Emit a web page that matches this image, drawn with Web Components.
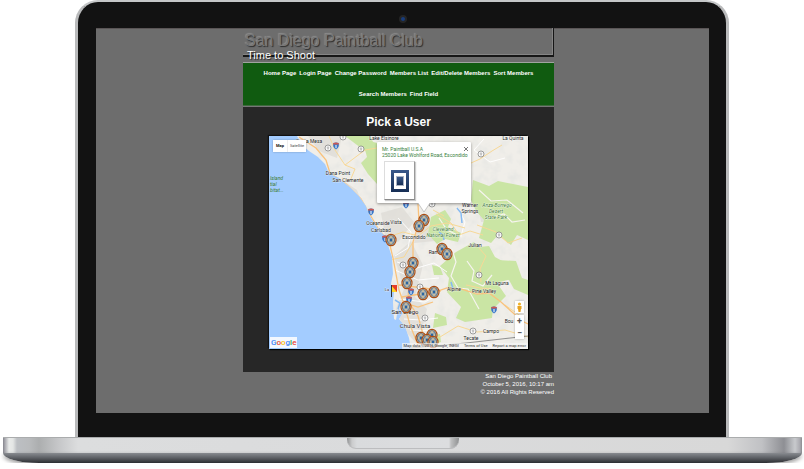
<!DOCTYPE html>
<html lang="en">
<head>
<meta charset="utf-8">
<title>San Diego Paintball Club</title>
<style>
body{margin:0;background:#fff;font-family:"Liberation Sans",Arial,sans-serif;overflow:hidden}
</style>
</head>
<body>
<laptop-frame>
  <club-page>
    <club-header slot="header"></club-header>
    <club-nav slot="nav"></club-nav>
    <field-map></field-map>
    <club-footer slot="footer"></club-footer>
  </club-page>
</laptop-frame>
<script>
function define(name, html, setup) {
  const t = document.createElement('template');
  t.innerHTML = html;
  customElements.define(name, class extends HTMLElement {
    constructor() {
      super();
      this.attachShadow({ mode: 'open' }).append(t.content.cloneNode(true));
      if (setup) setup(this.shadowRoot);
    }
  });
}

define('laptop-frame', `
<style>
:host{display:block}
.lid{margin:0 75px;box-sizing:border-box;border:3px solid #b9babb;border-top:2px solid #c5c7c8;border-bottom:0;border-radius:23px 23px 0 0;background:#121212;padding:0 17px 24px 18px}
.cam{height:26px;display:grid;place-items:center;padding-top:8px;box-sizing:border-box}
.cam i{width:4px;height:4px;border-radius:50%;background:#173c7c;border:2px solid #252525}
.screen{background:#6d6d6d;min-height:385px;box-shadow:inset 0 1px #5a5556;overflow:hidden}
.base{margin:0 2px 0 3px;height:16px;box-sizing:border-box;border-top:1px solid #aaacad;background:linear-gradient(90deg,#85858d 0,#a9a9af 2px,#e9ebea 6px,#e4e6e5 10px,#bcbfc3 14px,#b9bbbd 26px,#acaeaf 36px,#c5c6c8 55px,#dcddde 75px,#dadbdc 50%,#d8d8d8 calc(100% - 74px),#c0c1c4 calc(100% - 40px),#8e8f94 calc(100% - 18px),#c8cacd calc(100% - 7px),#aaaab0 calc(100% - 2px),#8c8c90 100%);display:flex;justify-content:center}
.notch{width:112px;height:11px;border-radius:0 0 9px 9px;background:linear-gradient(90deg,#8f9192,#cbcccd 5px,#d9dbdd 10px,#dcdddf calc(100% - 10px),#bfc0c1 calc(100% - 8px),#8f9192);box-shadow:inset 0 -1px #bcbdbf}
.foot{margin:0 2px 0 3px;height:10px;background:linear-gradient(#888b90,#606368 45%,#2c2d31);border-radius:0 0 36px 36px/0 0 10px 10px;box-shadow:0 2px 4px #0006}
</style>
<div class="lid"><div class="cam"><i></i></div><div class="screen"><slot></slot></div></div>
<div class="base"><div class="notch"></div></div><div class="foot"></div>`);

define('club-page', `
<style>
:host{display:block;padding:0 155px 0 147px}
main{background:#272727;padding:8px 26px 23px;border-top:1px solid #777;box-sizing:border-box}
h2{margin:0 0 7px;font-size:12px;line-height:14px;color:#fff;text-align:center}
</style>
<slot name="header"></slot><slot name="nav"></slot>
<main><h2>Pick a User</h2><slot></slot></main>
<slot name="footer"></slot>`);

define('club-header', `
<style>
:host{display:block;padding-bottom:5px}
header{height:29px;box-sizing:border-box;border-right:1px solid #161616;border-bottom:2px solid #161616;box-shadow:inset -1px -1px #858585;padding:5px 0 0 2px}
h1{margin:0;font-size:16px;line-height:16px;font-weight:400;color:#787878;text-shadow:1px 1px 1px #2c2c2c,-1px -1px 1px #8c8c8c;white-space:nowrap}
p{margin:0 0 0 2px;font-size:11px;line-height:12px;color:#fff;text-shadow:1px 1px 1px #222;white-space:nowrap}
</style>
<header><h1>San Diego Paintball Club</h1><p>Time to Shoot</p></header>`);

define('club-nav', `
<style>
:host{display:block}
nav{background:#105b10;border-top:1px solid #a0a4a0;border-bottom:1px solid #3c6b3c;display:flex;flex-wrap:wrap;justify-content:center;column-gap:3px;padding:0 16px}
a{color:#fff;font-size:6px;line-height:21px;font-weight:700;text-decoration:none;white-space:nowrap}
</style>
<nav></nav>`, root => {
  for (const label of ['Home Page','Login Page','Change Password','Members List','Edit/Delete Members','Sort Members','Search Members','Find Field']) {
    const a = document.createElement('a');
    a.href = '#'; a.textContent = label;
    root.querySelector('nav').append(a);
  }
});

define('club-footer', `
<style>
:host{display:block;text-align:right;color:#fff;font-size:6px;line-height:8px}
p{margin:0}.n{padding-right:2px}
</style>
<p class="n">San Diego Paintball Club</p><p>October 5, 2016, 10:17 am</p><p>© 2016 All Rights Reserved</p>`);

define('field-map', `
<style>
:host{display:block;position:relative;font-family:Roboto,"Liberation Sans",sans-serif;box-shadow:1px 1px 1px #000,-1px -1px 1px #111}
svg{display:block}
.map{width:100%;height:auto}
button{border:0;margin:0;padding:0;background:#fff;font:inherit;color:#333;cursor:pointer}
.type{position:absolute;left:4px;top:4px;display:flex;background:#fff;border-radius:1px;box-shadow:0 0 2px #0005;font-size:4px;line-height:12px}
.type button{padding:0 2px;color:#444}
.type button:first-child{font-weight:700;color:#111;border-right:1px solid #eee;padding:0 3px}
.zoom{position:absolute;right:4px;bottom:10px;display:grid;gap:2px}
.zoom div{display:grid;background:#fff;box-shadow:0 0 2px #0004}
.zoom button{width:9px;height:12px;display:grid;place-items:center;font-size:9px;line-height:12px;font-weight:700;color:#555}
.info{position:absolute;left:41.7%;top:6px;width:94px;height:61px;box-sizing:border-box;background:#fff;border-radius:1px;box-shadow:0 1px 3px #0006;padding:4px 5px;font-size:5px;line-height:6px;color:#38803c;white-space:nowrap}
.info p{margin:0}
.tail{position:absolute;left:40px;top:61px}
.close{position:absolute;right:2px;top:3px;width:7px;height:7px;display:grid;place-items:center}
.pic{margin:3px 0 0 2px;width:31px;height:39px;box-sizing:border-box;border:1px solid #ddd;border-right-color:#999;border-bottom-color:#888;display:grid;place-items:center;box-shadow:1px 1px 1px #0003}
.legal{position:absolute;right:0;bottom:0;display:flex;gap:5px;padding:0 2px;background:#f5f5f5aa;font-size:4px;line-height:6px;color:#333}
.legal a{color:inherit;text-decoration:none}
.g{position:absolute;left:1px;bottom:1px;background:#fffd;padding:0 1px;font:500 8px/11px Roboto,sans-serif}
</style>
<svg class="map" viewBox="269 136 259 213" role="img" aria-label="Map of the San Diego area">
<defs>
<filter id="t" x="0" y="0" width="100%" height="100%"><feTurbulence type="fractalNoise" baseFrequency=".11" numOctaves="3" seed="4"/><feColorMatrix values="0 0 0 0 .77 0 0 0 0 .78 0 0 0 0 .76 1.6 0 0 0 -.7"/></filter>
<clipPath id="land"><use href="#coast"/></clipPath>
<g id="m"><ellipse rx="5" ry="5.700" fill="#f3e9d8" stroke="#a84d14" stroke-width="1.200"/><ellipse rx="3.600" ry="4.300" fill="#9aa9b5" stroke="#35404b" stroke-width=".7"/><path d="M-3.200 0H3.200M0-4V4" stroke="#f3d390" stroke-width="1"/><path d="M0-2 1.700 0 0 2-1.700 0Z" fill="#2b64a3"/></g>
<g id="i5"><path d="M-2.600-3Q0-4 2.600-3Q3.800 1 0 3.600Q-3.800 1-2.600-3Z" fill="#3776c8"/><path d="M-2.600-3Q0-4 2.600-3L2.800-1.500H-2.800Z" fill="#cf5750"/><path d="M0-1V2.200" stroke="#fff"/></g>
<g id="r"><circle r="3" fill="#fafafa" stroke="#777" stroke-width=".7"/><path d="M-1.200-.8H1.200M-.9.8H1" stroke="#777" stroke-width=".6"/></g>
</defs>
<path fill="#a3ccff" d="M269 136h259v213H269z"/>
<path id="coast" fill="#f0eee9" d="M297 136 302 145 309 151 318 157 325 164 329 173 339 178 351 188 359 196 366 206 370 216 376 226 384 235 388 245 392 257 393 274 391 284 394 292 393 302 394 319 396 320 398 308 403 313 399 319 405 326 409 338 411 349H528V136Z"/>
<g clip-path="url(#land)">
<path filter="url(#t)" d="M300 136h228v213H300z"/>
<g fill="#dedbd5" opacity=".75"><path d="M308 136h34l-5 22-18-7ZM345 182l12 8 3 8-7-3ZM381 213l21-6 12 15-16 20-13-6ZM394 256l17-15 12 24-8 32 12 12-9 36-13-14-9-22 8-20ZM418 224l20 3-3 14-21 2ZM478 207l10 1 4 13-11 1Z"/></g>
<g fill="#cae5a4">
<path d="M362 139 377 143V184L368 174 361 163 367 157Z"/><path d="M345 136 370 136 376 148 365 151Z"/>
<path d="M473 180 489 186 498 181 528 187V240L517 235 511 245 498 235 491 243 479 238 484 220 476 211 471 200Z"/>
<path d="M431 217 445 210 451 219 448 227 461 233 458 242 445 239 437 244 428 234Z"/>
<path d="M456 252 474 242 479 247 489 246 495 257 515 268 511 279 497 283 506 296 493 309 492 318 465 322 456 318 461 307 447 292 449 278 440 266Z"/>
<path d="M497 260 516 261 522 278 528 280V295L514 289 509 280 497 276ZM435 313 446 317 447 325 433 328ZM432 265 440 267 443 275 434 275ZM428 336 440 334 441 342 432 345Z"/>
</g>
<g fill="none" stroke="#f6f4ef" stroke-width="1.200"><path d="M452 249 456 262 451 276 458 288 468 289 479 309M467 261 474 271 472 281 483 286 492 275M479 190 491 201 507 200 523 213M486 219 504 214 512 222 525 220M439 218 447 230 462 237"/></g>
<g fill="none" stroke="#fff" stroke-width=".9"><path d="M398 218 411 232 408 248 395 256M397 262 417 268 434 263 447 272M395 270 418 280 439 278M399 299 425 302 439 294M404 319 421 320 438 318M410 330 436 331M484 139 474 150 490 162 505 158M458 208 465 222 461 236"/></g>
<g fill="none" stroke="#f7d896" stroke-width="1"><path d="M329 136 335 150 345 165 355 169 350 181 342 178M345 165 365 150 377 148M471 163 480 159 492 151 502 145M436 214 451 223 459 235 470 231 483 235M388 237 403 232 418 236 431 226 447 223 465 228M477 225 496 232 508 243 522 238M390 260 404 257 413 242M433 210 444 216M466 285 480 288 492 289M479 248 486 256 480 269 481 282M416 345 428 333 440 337 458 326 477 332 505 330 528 337M505 305 522 317"/></g>
<g fill="none" stroke="#f9c27c" stroke-width="1.300"><path d="M299 137 316 148 326 160 330 173 345 183 361 199 369 213 379 230 389 241 393 258 396 274 399 290 405 307 410 325 418 345M418 204 419 222 413 242 413 262 409 278 408 301 418 316 423 334M402 297 420 294 435 292 447 288 461 289 477 294 489 293 501 302 522 321 528 324M399 285 424 288 441 291M405 303 418 307 433 302"/></g>
<path d="M411 348 466 343 528 336" stroke="#777" stroke-width=".8" fill="none"/>
</g>
<path d="m439 232 4 3 1 5M457 208l4 5 1 10M395 300l5 3-2 6M451 282l2 7" stroke="#85baf2" stroke-width="1.500" fill="none"/>
<use href="#i5" x="336" y="146"/><use href="#i5" x="371" y="212"/><use href="#i5" x="406" y="205"/><use href="#i5" x="385" y="239"/><use href="#i5" x="411" y="292"/><use href="#i5" x="409" y="300"/><use href="#i5" x="494" y="310"/>
<use href="#r" x="328" y="148"/><use href="#r" x="343" y="137"/><use href="#r" x="361" y="149"/><use href="#r" x="481" y="154"/><use href="#r" x="432" y="204"/><use href="#r" x="499" y="235"/><use href="#r" x="479" y="275"/><use href="#r" x="403" y="265"/><use href="#r" x="425" y="318"/><use href="#r" x="420" y="287"/><use href="#r" x="473" y="331"/>
<g font-family="Roboto,sans-serif" font-size="5" fill="#222" stroke="#fff" stroke-width=".7" paint-order="stroke" stroke-opacity=".8" text-anchor="middle">
<text x="309" y="143">Costa Mesa</text><text x="384" y="140">Lake Elsinore</text><text x="513" y="140">La Quinta</text><text x="338" y="175">Dana Point</text><text x="348" y="182">San Clemente</text>
<text x="378" y="225">Oceanside</text><text x="396" y="224">Vista</text><text x="381" y="232">Carlsbad</text><text x="414" y="239">Escondido</text>
<text x="470" y="207">Warner</text><text x="470" y="213">Springs</text><text x="475" y="247">Julian</text><text x="438" y="254">Ramona</text><text x="454" y="291">Alpine</text><text x="484" y="293">Pine Valley</text><text x="497" y="285">Mt Laguna</text>
<text x="405" y="314" font-size="6" fill="#111">San Diego</text><text x="415" y="328" font-size="6">Chula Vista</text><text x="491" y="333">Campo</text><text x="471" y="340">Tecate</text><text x="509" y="323">Bou</text><text x="387" y="291" font-size="4">La</text>
<g fill="#3a7a30" font-style="italic"><text x="497" y="207">Anza-Borrego</text><text x="496" y="213">Desert</text><text x="496" y="219">State Park</text><text x="443" y="231">Cleveland</text><text x="443" y="237">National Forest</text></g>
<g fill="#3a7a30" stroke="none" font-style="italic" text-anchor="start"><text x="270" y="180">Island</text><text x="270" y="186">tial</text><text x="270" y="192">bitat...</text></g>
</g>
<path d="M391 285h6v7h-6z" fill="#e63c28"/><path d="m391 285 6 7h-6z" fill="#ffd527"/><path d="M391.500 285v12" stroke="#333" stroke-width="1"/>
<g id="pins"></g>
</svg>
<div class="type"><button>Map</button><button>Satellite</button></div>
<div class="info"><p>Mr. Paintball U.S.A</p><p>25020 Lake Wohlford Road, Escondido</p>
<div class="pic"><svg width="18" height="22" viewBox="0 0 18 22"><defs><linearGradient id="b" x2="0" y2="1"><stop stop-color="#39588a"/><stop offset="1" stop-color="#162e55"/></linearGradient></defs><path fill="url(#b)" fill-rule="evenodd" d="M0 0h18v22H0zM3 3v16h12V3z"/><path fill="#a9b3c4" d="M5 6h8v10H5z"/><path fill="url(#b)" d="M6 7h6v8H6z"/></svg></div>
<button class="close" aria-label="Close"><svg width="4" height="4" viewBox="0 0 4 4"><path d="m0 0 4 4M4 0 0 4" stroke="#555" stroke-width=".8"/></svg></button>
<svg class="tail" width="14" height="10" viewBox="0 0 14 10"><path d="M1 0 7 9 13 0" fill="#fff" stroke="#aaa" stroke-width=".6"/></svg></div>
<div class="zoom"><div><button aria-label="Street View"><svg width="5" height="10" viewBox="0 0 5 10"><circle cx="2.500" cy="2" r="1.600" fill="#f0b42c"/><path d="M.5 4h4v3H4L3.500 10h-2L1 7H.5z" fill="#e8a21f"/></svg></button></div><div><button aria-label="Zoom in">+</button><button aria-label="Zoom out">−</button></div></div>
<div class="g"><span style="color:#4285f4">G</span><span style="color:#ea4335">o</span><span style="color:#fbbc05">o</span><span style="color:#4285f4">g</span><span style="color:#34a853">l</span><span style="color:#ea4335">e</span></div>
<div class="legal"><span>Map data ©2016 Google, INEGI</span><a href="#">Terms of Use</a><a href="#">Report a map error</a></div>`, root => {
  const pins = [[424,220],[419,226],[391,240],[442,249],[447,254],[413,263],[410,272],[407,283],[423,294],[434,292],[406,307],[421,338],[432,335],[427,340],[433,342]];
  for (const [x, y] of pins) {
    const u = document.createElementNS('http://www.w3.org/2000/svg', 'use');
    u.setAttribute('href', '#m'); u.setAttribute('x', x); u.setAttribute('y', y);
    root.getElementById('pins').append(u);
  }
});
</script>
</body>
</html>
